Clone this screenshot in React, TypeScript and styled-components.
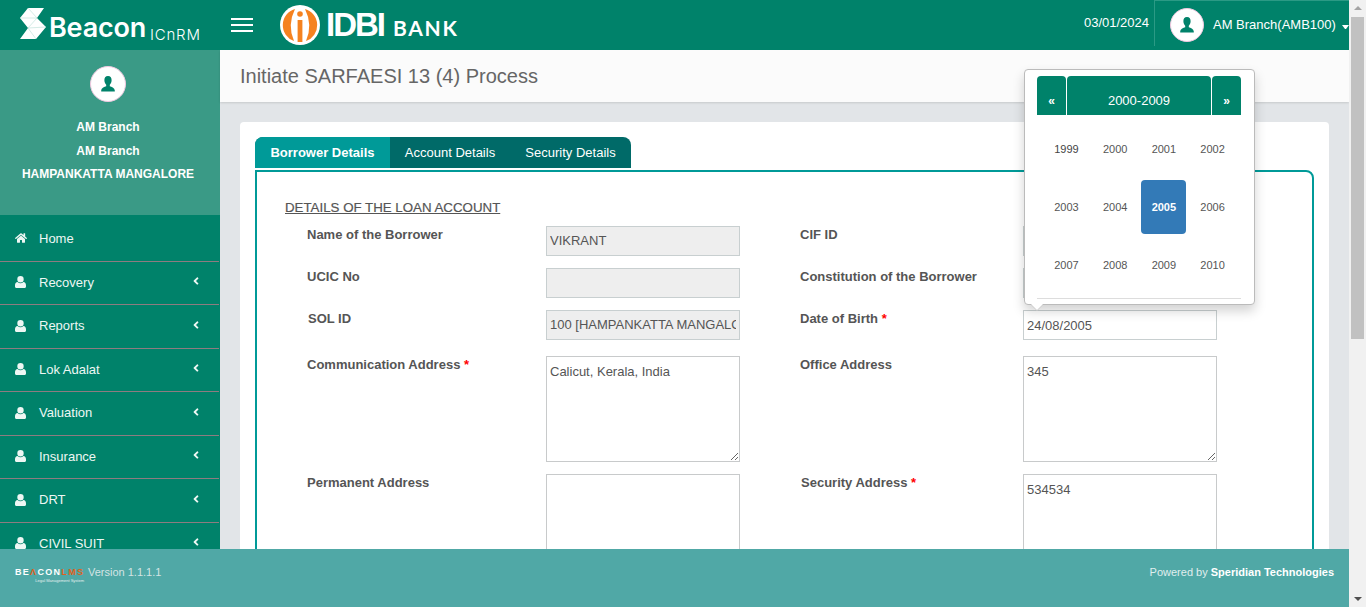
import React from 'react';
import styled, { createGlobalStyle } from 'styled-components';
import { FaAngleLeft, FaHome } from 'react-icons/fa';

const GlobalStyle = createGlobalStyle`
    html, body {
        margin: 0;
        height: 100%;
        overflow: hidden;
    }
    body {
        font-family: "Liberation Sans", Arial, sans-serif;
        color: #555;
    }
    #root {
        height: 100%;
    }
    * {
        box-sizing: border-box;
    }
`;

const Page = styled.div`
    display: flex;
    height: 607px;
`;
const Viewport = styled.div`
    flex: 1;
    min-width: 0;
    display: flex;
    flex-direction: column;
`;

// header
const Header = styled.header`
    height: 50px;
    flex: none;
    display: flex;
    align-items: stretch;
    background-color: #00826a;
    color: #fff;
`;
const Brand = styled.div`
    width: 220px;
    flex: none;
    display: flex;
    align-items: flex-start;
    padding: 8px 0 0 20px;
`;
const BrandWord = styled.span`
    font-family: Inter, sans-serif;
    font-size: 27px;
    font-weight: 600;
    line-height: 31px;
    margin: 4px 0 0 3px;
    letter-spacing: -0.2px;
`;
const BrandSuffix = styled.span`
    font-family: Inter, sans-serif;
    font-size: 15px;
    font-weight: 300;
    line-height: 18px;
    margin: 18px 0 0 4px;
    letter-spacing: 0.8px;
`;
const MenuToggle = styled.div`
    width: 22px;
    height: 14px;
    margin: 18px 0 0 11px;
    display: flex;
    flex-direction: column;
    justify-content: space-between;
    span {
        display: block;
        height: 2px;
        background-color: #fff;
    }
`;
const BankLogo = styled.div`
    display: flex;
    align-items: center;
    margin-left: 27px;
    flex: 1;
`;
const BankName = styled.span`
    font-family: "Liberation Sans", sans-serif;
    font-size: 33px;
    font-weight: 700;
    margin: 0 0 0 6px;
    letter-spacing: -2px;
    line-height: 50px;
`;
const BankWord = styled.span`
    font-family: Lato, sans-serif;
    font-size: 21px;
    font-weight: 700;
    margin: 5px 0 0 9px;
    letter-spacing: 1.7px;
`;
const HeaderDate = styled.div`
    font-size: 13px;
    margin: 15px 5px 0 0;
`;
const UserBlock = styled.div`
    width: 195px;
    height: 46px;
    flex: none;
    display: flex;
    align-items: flex-start;
    padding: 7px 0 0 15px;
    border-left: 1px solid #2b9a85;
    border-top: 1px solid #2b9a85;
    font-size: 13px;
`;
const UserName = styled.span`
    margin: 9px 0 0 9px;
    white-space: nowrap;
`;
const Caret = styled.span`
    flex: none;
    width: 7px;
    height: 4px;
    margin: 17px 0 0 6px;
    border-left: 3.5px solid transparent;
    border-right: 3.5px solid transparent;
    border-top: 4px solid #fff;
`;
const Avatar = styled.div<{ $size: number }>`
    width: ${p => p.$size}px;
    height: ${p => p.$size}px;
    flex: none;
    display: flex;
    align-items: center;
    justify-content: center;
    border-radius: 50%;
    background-color: #fff;
    border: 1px solid #f0c8e0;
`;

// body
const Body = styled.div`
    flex: 1;
    min-height: 0;
    display: flex;
    overflow: hidden;
`;
const Sidebar = styled.aside`
    width: 220px;
    flex: none;
    background-color: #00826a;
`;
const Profile = styled.div`
    height: 165px;
    background-color: #3a9a86;
    display: flex;
    flex-direction: column;
    align-items: center;
    padding: 16px 4px 0 0;
`;
const ProfileLine = styled.div`
    font-size: 12px;
    font-weight: 700;
    line-height: 23.5px;
    color: #fff;
`;
const ProfileLines = styled.div`
    margin-top: 14px;
    display: flex;
    flex-direction: column;
    align-items: center;
`;
const MenuItem = styled.div<{ $first?: boolean }>`
    width: 219px;
    height: ${p => (p.$first ? '47px' : '43.45px')};
    display: flex;
    align-items: center;
    padding: ${p => (p.$first ? '0 0 0 15px' : '0 0 1.5px 15px')};
    border-bottom: 1px solid #8e7c80;
    color: #eef7f4;
    font-size: 13px;
`;
const MenuIcon = styled.span`
    width: 24px;
    display: flex;
    font-size: 12px;
`;
const MenuLabel = styled.span`
    flex: 1;
`;
const MenuArrow = styled.span`
    width: 29px;
    display: flex;
    font-size: 12px;
    margin-top: -2px;
`;

// content
const Content = styled.main`
    flex: 1;
    min-width: 0;
    background-color: #e2e5e8;
`;
const TitleBar = styled.div`
    height: 52px;
    padding: 14px 20px 0;
    background-color: #fbfbfb;
    box-shadow: 0 1px 2px rgba(0, 0, 0, 0.12);
    font-size: 20px;
    line-height: 24px;
    color: #666;
`;
const Card = styled.div`
    margin: 20px 20px 0;
    padding: 15px 15px 0;
    height: 700px;
    background-color: #fff;
    border-radius: 4px;
`;
const Tabs = styled.div`
    display: flex;
    width: 376px;
    height: 31px;
    border-radius: 8px 8px 0 0;
    overflow: hidden;
    background-color: #006a68;
    margin-bottom: 2px;
`;
const Tab = styled.div<{ $active?: boolean; $width: number }>`
    width: ${p => p.$width}px;
    display: flex;
    align-items: center;
    justify-content: center;
    background-color: ${p => (p.$active ? '#009a98' : 'transparent')};
    color: #fff;
    font-size: 13px;
    font-weight: ${p => (p.$active ? 700 : 400)};
`;
const Panel = styled.div`
    border: 2px solid #009a98;
    border-radius: 0 8px 0 0;
    padding: 28px 28px 0;
    height: 600px;
`;
const SectionTitle = styled.div`
    font-size: 13.3px;
    line-height: 16px;
    text-decoration: underline;
    -webkit-text-stroke: 0.2px #555;
    color: #555;
    margin-bottom: 10px;
`;
const FormGrid = styled.div`
    display: grid;
    grid-template-columns: 261px 194px 283px 194px;
    grid-template-rows: 30px 30px 34px 106px 106px;
    row-gap: 12px;
`;
const Label = styled.label<{ $right?: boolean; $nudge?: boolean }>`
    font-size: 13px;
    font-weight: 700;
    line-height: 16px;
    color: #555;
    padding-top: 1px;
    padding-left: ${p => (p.$right ? 60 : 22) + (p.$nudge ? 1 : 0)}px;
`;
const Required = styled.span`
    color: #f00;
`;
const TextField = styled.input`
    display: block;
    width: 194px;
    height: 30px;
    padding: 0 3px ${p => (p.disabled ? '2px' : '0')};
    border: 1px solid #c8cfd0;
    border-radius: 0;
    background-color: ${p => (p.disabled ? '#eee' : '#fff')};
    color: #555;
    font: 13px "Liberation Sans", Arial, sans-serif;
    outline: none;
    &:disabled {
        color: #555;
    }
`;
const TextBox = styled.textarea`
    display: block;
    width: 194px;
    height: 106px;
    padding: 6px 3px;
    border: 1px solid #c8cacb;
    border-radius: 0;
    background-color: #fff;
    color: #555;
    font: 13px/18px "Liberation Sans", Arial, sans-serif;
    outline: none;
    resize: both;
`;
const DateWrap = styled.div`
    position: relative;
    align-self: start;
`;

// datepicker popup
const Picker = styled.div`
    position: absolute;
    left: 1px;
    bottom: 35px;
    width: 231px;
    height: 236px;
    padding: 6px 13px 0 12px;
    background-color: #fff;
    border: 1px solid #bbb;
    border-radius: 4px;
    box-shadow: 0 6px 12px rgba(0, 0, 0, 0.18);
    &::after {
        content: '';
        position: absolute;
        left: 6px;
        bottom: -6px;
        width: 0;
        height: 0;
        border-left: 6px solid transparent;
        border-right: 6px solid transparent;
        border-top: 6px solid #fff;
        filter: drop-shadow(0 1px 0 #ccc);
    }
`;
const PickerHead = styled.div`
    display: flex;
    gap: 1px;
    height: 39px;
`;
const PickerButton = styled.div<{ $grow?: boolean }>`
    width: ${p => (p.$grow ? 'auto' : '29px')};
    flex: ${p => (p.$grow ? 1 : 'none')};
    display: flex;
    align-items: flex-end;
    justify-content: center;
    padding-bottom: 6px;
    background-color: #00826a;
    border-radius: 4px 4px 0 0;
    color: #fff;
    font-size: ${p => (p.$grow ? '13px' : '12px')};
    font-weight: ${p => (p.$grow ? 400 : 700)};
    line-height: 16px;
`;
const YearGrid = styled.div`
    display: grid;
    grid-template-columns: repeat(4, 45px);
    column-gap: 3.7px;
    grid-auto-rows: 54px;
    row-gap: 4px;
    margin: 7px 0 0 7px;
`;
const Year = styled.div<{ $active?: boolean; $dark?: boolean }>`
    display: flex;
    align-items: center;
    justify-content: center;
    border-radius: 4px;
    font-size: 11px;
    font-weight: ${p => (p.$active ? 700 : 400)};
    background-color: ${p => (p.$active ? '#337ab7' : 'transparent')};
    color: ${p => (p.$active ? '#fff' : p.$dark ? '#444' : '#555')};
`;
const PickerRule = styled.div`
    height: 1px;
    margin-top: 6px;
    background-color: #ddd;
`;

// footer
const Footer = styled.footer`
    height: 58px;
    flex: none;
    display: flex;
    align-items: flex-start;
    padding: 16px 15px 0;
    background-color: #50a8a6;
`;
const FooterBrand = styled.div`
    width: 73px;
    flex: none;
    margin-top: 1px;
    display: flex;
    flex-direction: column;
`;
const FooterMark = styled.div`
    font-size: 9px;
    font-weight: 700;
    letter-spacing: 1.3px;
    line-height: 12px;
    color: #fff;
    white-space: nowrap;
    span {
        color: #e0621c;
    }
`;
const FooterTag = styled.div`
    font-size: 4px;
    line-height: 5px;
    color: #e4efee;
    text-align: right;
    margin-right: 4px;
    white-space: nowrap;
`;
const Version = styled.div`
    font-size: 11px;
    line-height: 14px;
    color: #d4e4e4;
    flex: 1;
`;
const Powered = styled.div`
    font-size: 11px;
    line-height: 14px;
    color: #e0eeee;
    b {
        color: #fff;
    }
`;

// scrollbar
const ScrollBar = styled.div`
    width: 17px;
    flex: none;
    display: flex;
    flex-direction: column;
    align-items: center;
    background-color: #f1f1f1;
`;
const ScrollArrow = styled.div<{ $down?: boolean }>`
    flex: none;
    margin: ${p => (p.$down ? 'auto 0 6px' : '6px 0 5px')};
    width: 8px;
    height: 4px;
    border-left: 4px solid transparent;
    border-right: 4px solid transparent;
    border-bottom: ${p => (p.$down ? 0 : '4px solid #a3a3a3')};
    border-top: ${p => (p.$down ? '4px solid #505050' : 0)};
`;
const ScrollThumb = styled.div`
    width: 13px;
    height: 322px;
    margin-top: 2px;
    background-color: #c1c1c1;
`;

const BeaconMark: React.FC = () => (
    <svg width="26" height="32" viewBox="0 0 26 32">
        <polygon points="8,0 24,0 17,10 26,19 16,31 0,31 8,20 0,10" fill="#fff" />
        <path d="M8 0 L17 10 L8 20 L16 31 M0 10 L17 10 M8 20 L26 19" fill="none" stroke="#b9ded5" strokeWidth="0.6" />
    </svg>
);

const IdbiMark: React.FC = () => (
    <svg width="40" height="40" viewBox="0 0 40 40">
        <circle cx="20" cy="20" r="20" fill="#fff" />
        <path d="M15 4 A16.8 16.8 0 0 0 14 36 Q 7 20 15 4 Z" fill="#f58220" />
        <path d="M25 4 A16.8 16.8 0 0 1 26 36 Q 33 20 25 4 Z" fill="#f58220" />
        <circle cx="20" cy="9" r="2.8" fill="#f58220" />
        <rect x="17.6" y="15" width="4.8" height="22" fill="#f58220" />
    </svg>
);

const PersonIcon: React.FC = () => (
    <svg width="18" height="18" viewBox="0 0 18 18">
        <path
            d="M9 1 C11.6 1 12.8 3 12.6 5.6 C12.5 7.6 11.6 9 10.8 9.8 L10.8 11.2 C12.6 12 15.6 12.6 15.8 15.6 L15.8 16.5 L2.2 16.5 L2.2 15.6 C2.4 12.6 5.4 12 7.2 11.2 L7.2 9.8 C6.4 9 5.5 7.6 5.4 5.6 C5.2 3 6.4 1 9 1 Z"
            fill="#00826a"
        />
    </svg>
);

const MenuUser: React.FC = () => (
    <svg width="11" height="12" viewBox="0 0 11 12">
        <path
            d="M5.5 0 a3.2 3.2 0 1 1 0 6.4 a3.2 3.2 0 1 1 0 -6.4 Z M2.6 6 C3.4 6.8 4.4 7.2 5.5 7.2 S7.6 6.8 8.4 6 C10 6 11 7.4 11 9.5 V10.5 C11 11.4 10.4 12 9.5 12 H1.5 C0.6 12 0 11.4 0 10.5 V9.5 C0 7.4 1 6 2.6 6 Z"
            fill="currentColor"
        />
    </svg>
);

const menu = ['Recovery', 'Reports', 'Lok Adalat', 'Valuation', 'Insurance', 'DRT', 'CIVIL SUIT'];
const years = [1999, 2000, 2001, 2002, 2003, 2004, 2005, 2006, 2007, 2008, 2009, 2010];

const App: React.FC = () => {
    return (
        <Page>
            <GlobalStyle />
            <Viewport>
                <Header>
                    <Brand>
                        <BeaconMark />
                        <BrandWord>Beacon</BrandWord>
                        <BrandSuffix>ICnRM</BrandSuffix>
                    </Brand>
                    <MenuToggle>
                        <span />
                        <span />
                        <span />
                    </MenuToggle>
                    <BankLogo>
                        <IdbiMark />
                        <BankName>IDBI</BankName>
                        <BankWord>BANK</BankWord>
                    </BankLogo>
                    <HeaderDate>03/01/2024</HeaderDate>
                    <UserBlock>
                        <Avatar $size={34}><PersonIcon /></Avatar>
                        <UserName>AM Branch(AMB100)</UserName>
                        <Caret />
                    </UserBlock>
                </Header>
                <Body>
                    <Sidebar>
                        <Profile>
                            <Avatar $size={36}><PersonIcon /></Avatar>
                            <ProfileLines>
                                <ProfileLine>AM Branch</ProfileLine>
                                <ProfileLine>AM Branch</ProfileLine>
                                <ProfileLine>HAMPANKATTA MANGALORE</ProfileLine>
                            </ProfileLines>
                        </Profile>
                        <MenuItem $first>
                            <MenuIcon><FaHome /></MenuIcon>
                            <MenuLabel>Home</MenuLabel>
                        </MenuItem>
                        {menu.map(item => (
                            <MenuItem key={item}>
                                <MenuIcon><MenuUser /></MenuIcon>
                                <MenuLabel>{item}</MenuLabel>
                                <MenuArrow><FaAngleLeft /></MenuArrow>
                            </MenuItem>
                        ))}
                    </Sidebar>
                    <Content>
                        <TitleBar>Initiate SARFAESI 13 (4) Process</TitleBar>
                        <Card>
                            <Tabs>
                                <Tab $active $width={135}>Borrower Details</Tab>
                                <Tab $width={120}>Account Details</Tab>
                                <Tab $width={121}>Security Details</Tab>
                            </Tabs>
                            <Panel>
                                <SectionTitle>DETAILS OF THE LOAN ACCOUNT</SectionTitle>
                                <FormGrid>
                                    <Label>Name of the Borrower</Label>
                                    <TextField disabled value="VIKRANT" readOnly />
                                    <Label $right>CIF ID</Label>
                                    <TextField disabled value="" readOnly />

                                    <Label>UCIC No</Label>
                                    <TextField disabled value="" readOnly />
                                    <Label $right>Constitution of the Borrower</Label>
                                    <TextField disabled value="" readOnly />

                                    <Label $nudge>SOL ID</Label>
                                    <TextField disabled value="100 [HAMPANKATTA MANGALORE]" readOnly />
                                    <Label $right>Date of Birth <Required>*</Required></Label>
                                    <DateWrap>
                                        <TextField value="24/08/2005" readOnly />
                                        <Picker>
                                            <PickerHead>
                                                <PickerButton>«</PickerButton>
                                                <PickerButton $grow>2000-2009</PickerButton>
                                                <PickerButton>»</PickerButton>
                                            </PickerHead>
                                            <YearGrid>
                                                {years.map(year => (
                                                    <Year key={year} $active={year === 2005} $dark={year === 1999}>{year}</Year>
                                                ))}
                                            </YearGrid>
                                            <PickerRule />
                                        </Picker>
                                    </DateWrap>

                                    <Label>Communication Address <Required>*</Required></Label>
                                    <TextBox value="Calicut, Kerala, India" readOnly />
                                    <Label $right>Office Address</Label>
                                    <TextBox value="345" readOnly />

                                    <Label>Permanent Address</Label>
                                    <TextBox value="" readOnly />
                                    <Label $right $nudge>Security Address <Required>*</Required></Label>
                                    <TextBox value="534534" readOnly />
                                </FormGrid>
                            </Panel>
                        </Card>
                    </Content>
                </Body>
                <Footer>
                    <FooterBrand>
                        <FooterMark>BE<span>Λ</span>CON<span>LMS</span></FooterMark>
                        <FooterTag>Legal Management System</FooterTag>
                    </FooterBrand>
                    <Version>Version 1.1.1.1</Version>
                    <Powered>Powered by <b>Speridian Technologies</b></Powered>
                </Footer>
            </Viewport>
            <ScrollBar>
                <ScrollArrow />
                <ScrollThumb />
                <ScrollArrow $down />
            </ScrollBar>
        </Page>
    );
};

export default App;
